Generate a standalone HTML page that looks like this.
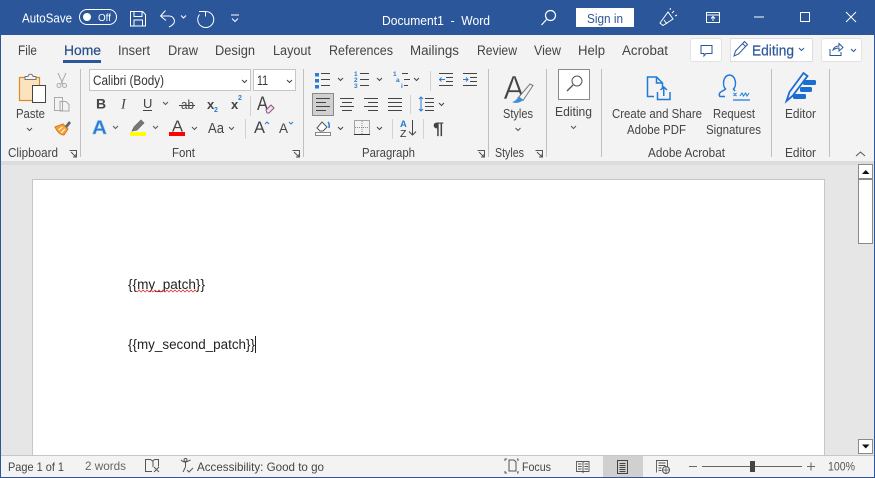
<!DOCTYPE html>
<html><head><meta charset="utf-8"><style>
html,body{margin:0;padding:0;width:875px;height:478px;overflow:hidden;background:#fff}
svg{display:block;position:absolute;left:0;top:0}
text{font-family:"Liberation Sans",sans-serif;font-size:12.800px;fill:#444}
.w{fill:#fff}
.g{stroke:#c6c6c6;stroke-width:1;fill:none}
.d{stroke:#444;stroke-width:1;fill:none}
.c{stroke:#555;stroke-width:1;fill:none}
</style></head><body>
<svg width="875" height="478" viewBox="0 0 875 478" xmlns="http://www.w3.org/2000/svg">
<rect width="875" height="478" fill="#2b579a"/>
<rect x="1" y="35" width="873" height="126" fill="#f3f3f3"/>
<rect x="1" y="161" width="873" height="4" fill="#dcdcdc"/>
<rect x="1" y="165" width="873" height="290" fill="#e6e6e6"/>
<rect x="32.500" y="179.500" width="792" height="290" fill="#fff" stroke="#c6c6c6"/>
<rect x="1" y="455" width="873" height="1" fill="#c6c6c6"/>
<rect x="1" y="456" width="873" height="21" fill="#f3f3f3"/>

<!-- Title bar -->
<text class="w" x="22" y="22.500" textLength="50" lengthAdjust="spacingAndGlyphs" style="font-size:13px">AutoSave</text>
<rect x="79.500" y="9.500" width="37" height="15" rx="7.500" fill="none" stroke="#fff"/>
<circle cx="87" cy="17" r="4" fill="#fff"/>
<text class="w" x="98" y="21" style="font-size:10.500px" textLength="13" lengthAdjust="spacingAndGlyphs">Off</text>
<g fill="none" stroke="#fff" stroke-width="1">
<path d="M130.500 11.500h12l3 3v11.500h-15z"/><path d="M134 11.500v5h8v-5M134 26v-6h8.500v6"/>
<path d="M160.500 16l5-5.500M160.500 16l5.500 4.500M161 16h8c5 0 6 5 5 7-1 2-3 3-5 4"/>
<path d="M181 15.500l2.500 2.500 2.500-2.500"/>
<path d="M205.500 11.500a8 8 0 1 1-6 3M199 11.500h6.500v5"/>
<path d="M231 15h8M232 18.500l3 3 3-3"/>
</g>
<text class="w" x="382" y="25" textLength="108" lengthAdjust="spacingAndGlyphs" style="font-size:13px">Document1&#160;&#160;-&#160;&#160;Word</text>
<g fill="none" stroke="#fff" stroke-width="1.200">
<circle cx="550.500" cy="15.500" r="5"/><path d="M546.500 19.500l-5 5.500"/>
</g>
<rect x="576" y="8" width="58" height="19" fill="#fff"/>
<text x="587" y="23" textLength="36" lengthAdjust="spacingAndGlyphs" style="fill:#2b579a;font-size:13px">Sign in</text>
<g fill="none" stroke="#fff" stroke-width="1">
<path d="M660 23l8-11 5 7-10 6.500zM664 20l3 4M672 13l2-2M675 16l2-1M670 10l.5-2"/>
<rect x="706.500" y="12.500" width="13" height="10"/><path d="M706.500 15h13M713 21v-4M711 18.500l2-2 2 2"/>
<path d="M754 17h10"/>
<rect x="800.500" y="12.500" width="9" height="9"/>
<path d="M846 12l10 10M856 12l-10 10"/>
</g>

<!-- Tabs -->
<text x="18" y="55" textLength="19" lengthAdjust="spacingAndGlyphs" style="font-size:13.500px">File</text>
<text x="64" y="55" textLength="37" lengthAdjust="spacingAndGlyphs" style="font-size:13.500px;fill:#2b4f8a;stroke:#2b4f8a;stroke-width:.25">Home</text>
<text x="118" y="55" textLength="32" lengthAdjust="spacingAndGlyphs" style="font-size:13.500px">Insert</text>
<text x="168" y="55" textLength="30" lengthAdjust="spacingAndGlyphs" style="font-size:13.500px">Draw</text>
<text x="215" y="55" textLength="40" lengthAdjust="spacingAndGlyphs" style="font-size:13.500px">Design</text>
<text x="273" y="55" textLength="38" lengthAdjust="spacingAndGlyphs" style="font-size:13.500px">Layout</text>
<text x="329" y="55" textLength="64" lengthAdjust="spacingAndGlyphs" style="font-size:13.500px">References</text>
<text x="410" y="55" textLength="49" lengthAdjust="spacingAndGlyphs" style="font-size:13.500px">Mailings</text>
<text x="477" y="55" textLength="40" lengthAdjust="spacingAndGlyphs" style="font-size:13.500px">Review</text>
<text x="534" y="55" textLength="27" lengthAdjust="spacingAndGlyphs" style="font-size:13.500px">View</text>
<text x="578" y="55" textLength="27" lengthAdjust="spacingAndGlyphs" style="font-size:13.500px">Help</text>
<text x="622" y="55" textLength="46" lengthAdjust="spacingAndGlyphs" style="font-size:13.500px">Acrobat</text>
<rect x="63" y="60" width="38" height="3" fill="#2b579a"/>

<!-- Comment/Editing/Share -->
<rect x="690.500" y="38.500" width="31" height="23" rx="2" fill="#fff" stroke="#e3e3e3"/>
<path d="M701 45.500h11v8h-6l-2 2.500v-2.500h-3z" fill="none" stroke="#2b579a"/>
<rect x="730.500" y="38.500" width="82" height="23" fill="#fff" stroke="#dedede"/>
<path d="M734 56l1.500-5 9-9.500 3 3-9 9.500zM742.500 43.500l3 3" fill="none" stroke="#2b579a"/>
<text x="752" y="55.500" textLength="42" lengthAdjust="spacingAndGlyphs" style="font-size:14.500px;fill:#2b579a;stroke:#2b579a;stroke-width:.2">Editing</text>
<path d="M799 48l2.500 2.500L804 48" fill="none" stroke="#2b579a"/>
<rect x="821.500" y="38.500" width="40" height="23" rx="2" fill="#fff" stroke="#e3e3e3"/>
<path d="M830 49v6.500h11V52M833 50c1-3 3-4 6-4v-2.500l4 4-4 3.500V48c-2 0-4 .5-6 2z" fill="none" stroke="#2b579a"/>
<path d="M851 49l2.500 2.500L856 49" fill="none" stroke="#2b579a"/>

<!-- Separators -->
<path d="M80.500 69v88M303.500 69v88M488.500 69v88M546.500 69v88M601.500 69v88M771.500 69v88M829.500 69v88" fill="none" stroke="#c0c0c0"/>
<path d="M250.500 96v20M245.500 119v20M430.500 71v20M410.500 95v19M392.500 119v20M423.500 119v20" fill="none" stroke="#d2d2d2"/>

<!-- Clipboard -->
<rect x="19.500" y="77.500" width="20" height="23" fill="#fbe3bd" stroke="#d68a2c" stroke-width="1.200"/>
<path d="M25 79.500v-3h3c0-3 5-3 5 0h3v3z" fill="#f3f3f3" stroke="#777"/>
<rect x="32.500" y="85.500" width="13" height="17" fill="#fff" stroke="#444"/>
<text x="16" y="118" textLength="29" lengthAdjust="spacingAndGlyphs">Paste</text>
<path d="M27 128l2.500 2.500L32 128" class="c"/>
<path d="M58 73l5 11M66 73l-5 11" stroke="#aaa" fill="none"/><circle cx="59" cy="85.500" r="2" fill="none" stroke="#aaa"/><circle cx="64.500" cy="85.500" r="2" fill="none" stroke="#aaa"/>
<path d="M54.500 97.500h8v13h-8zM60 101.500h6l3 3v6.500h-9z" fill="#f3f3f3" stroke="#aaa"/>
<path d="M55 127l8-3 5 5-4 6c-3 0-6-2-9-8z" fill="#f3a43b" stroke="#d67a1c"/><path d="M58.500 130l4-3M61 133l4-4" stroke="#fff" fill="none"/><path d="M65 126l4-5 2 2-4 5z" fill="#666"/>
<text x="8" y="157" textLength="50" lengthAdjust="spacingAndGlyphs">Clipboard</text>
<path d="M69.500 150.500h7v7M71 152l5 5M73 157h3v-3" class="c" stroke-width=".9"/>

<!-- Font -->
<rect x="89.500" y="69.500" width="161" height="21" fill="#fff" stroke="#c6c6c6"/>
<text x="93" y="85" textLength="71" lengthAdjust="spacingAndGlyphs" style="fill:#333;font-size:13.500px">Calibri (Body)</text>
<path d="M242 80l2.500 2.500L247 80" class="d"/>
<rect x="253.500" y="69.500" width="42" height="21" fill="#fff" stroke="#c6c6c6"/>
<text x="257" y="85" textLength="11" lengthAdjust="spacingAndGlyphs" style="fill:#333;font-size:13.500px">11</text>
<path d="M287 80l2.500 2.500L292 80" class="d"/>
<text x="96" y="108.500" style="font-weight:bold;font-size:14px">B</text>
<text x="121" y="108.500" style="font-style:italic;font-family:'Liberation Serif',serif;font-size:14.500px">I</text>
<text x="143" y="108" style="font-size:13px">U</text><path d="M143 110.500h9" class="d"/>
<path d="M163 102l2.500 2.500L168 102" class="c"/>
<text x="181" y="109" textLength="13" lengthAdjust="spacingAndGlyphs" style="font-size:13px">ab</text><path d="M179 105.500h16" class="d"/>
<text x="207" y="109" style="font-weight:bold;font-size:13px">x</text><text x="214" y="112" style="font-size:7px;fill:#2b7cd3;font-weight:bold">2</text>
<text x="231" y="109" style="font-weight:bold;font-size:13px">x</text><text x="238" y="100" style="font-size:7px;fill:#2b7cd3;font-weight:bold">2</text>
<text x="257" y="110" textLength="11" lengthAdjust="spacingAndGlyphs" style="font-size:19px">A</text>
<path d="M266 110l5-5 3 3-5 5h-2z" fill="#f0e0ea" stroke="#8a5a80"/>
<text x="92" y="134" textLength="15" lengthAdjust="spacingAndGlyphs" style="font-size:19px;font-weight:bold;fill:#2b7cd3;stroke:#8fc0ee;stroke-width:.5">A</text>
<path d="M113 126l2.500 2.500L118 126" class="c"/>
<path d="M132 131l2-4 7-7 3 3-7 7z" fill="#777" stroke="#666" stroke-width=".7"/>
<rect x="130" y="132" width="16" height="4" fill="#ffff00"/>
<path d="M153 126l2.500 2.500L158 126" class="c"/>
<text x="172" y="131.500" textLength="11" lengthAdjust="spacingAndGlyphs" style="font-size:16px">A</text>
<rect x="169" y="132" width="16" height="4" fill="#f00"/>
<path d="M192 127l2.500 2.500L197 127" class="c"/>
<text x="208" y="133" textLength="16" lengthAdjust="spacingAndGlyphs" style="font-size:14.500px">Aa</text>
<path d="M229 127l2.500 2.500L234 127" class="c"/>
<text x="254" y="133" textLength="11" lengthAdjust="spacingAndGlyphs" style="font-size:17px">A</text><path d="M265 124l2-2 2 2" fill="none" stroke="#2b7cd3"/>
<text x="279" y="133" textLength="9" lengthAdjust="spacingAndGlyphs" style="font-size:14px">A</text><path d="M289 122l2 2 2-2" fill="none" stroke="#2b7cd3"/>
<text x="172" y="157" textLength="23" lengthAdjust="spacingAndGlyphs">Font</text>
<path d="M292.500 150.500h7v7M294 152l5 5M296 157h3v-3" class="c" stroke-width=".9"/>

<!-- Paragraph -->
<rect x="315" y="73" width="4" height="3.500" fill="#2b7cd3"/><rect x="315" y="79" width="4" height="3.500" fill="#2b7cd3"/><rect x="315" y="85" width="4" height="3.500" fill="#2b7cd3"/>
<path d="M321 73.500h9M321 79.500h9M321 85.500h9M360 73.500h9M360 79.500h9M360 85.500h9M402 73.500h6M404 79.500h6M404 85.500h4" class="d"/>
<text x="354" y="76" style="font-size:6.500px;fill:#2b7cd3;font-weight:bold">1</text><text x="354" y="82" style="font-size:6.500px;fill:#2b7cd3;font-weight:bold">2</text><text x="354" y="88" style="font-size:6.500px;fill:#2b7cd3;font-weight:bold">3</text>
<text x="393" y="76" style="font-size:6.500px;fill:#2b7cd3;font-weight:bold">1</text><text x="396" y="82" style="font-size:6.500px;fill:#2b7cd3;font-weight:bold">a</text><text x="401" y="88" style="font-size:6.500px;fill:#2b7cd3;font-weight:bold">i</text>
<path d="M338 78l2.500 2.500L343 78M377 78l2.500 2.500L382 78M414 78l2.500 2.500L419 78" class="d"/>
<path d="M439 73.500h14M446 77.500h7M446 81.500h7M439 85.500h14M463 73.500h14M470 77.500h7M470 81.500h7M463 85.500h14" class="d"/>
<path d="M445 79.500h-6M441.500 77.500l-2 2 2 2M463 79.500h5M466 77.500l2 2-2 2" fill="none" stroke="#2b7cd3"/>
<rect x="312.500" y="93.500" width="21" height="22" fill="#d0d0d0" stroke="#8a8a8a"/>
<path d="M316 98.500h14M316 102.500h10M316 106.500h14M316 110.500h10" class="d"/>
<path d="M340 98.500h14M342 102.500h10M340 106.500h14M342 110.500h10M364 98.500h14M368 102.500h10M364 106.500h14M368 110.500h10M388 98.500h14M388 102.500h14M388 106.500h14M388 110.500h14" class="d"/>
<path d="M425 98.500h9M425 102.500h9M425 106.500h9M425 110.500h9" class="d"/>
<path d="M421 97v14M419 99l2-2 2 2M419 109l2 2 2-2" fill="none" stroke="#2b7cd3"/>
<path d="M439 103l2.500 2.500L444 103" class="d"/>
<path d="M317 128l5-6 5 5-4 4h-3z" fill="#fff" stroke="#555"/><path d="M328 122c1 1 1.500 3 1 6" stroke="#2b7cd3" fill="none" stroke-width="1.500"/>
<rect x="315.500" y="132.500" width="15" height="3" fill="#fff" stroke="#888"/>
<path d="M338 127l2.500 2.500L343 127" class="d"/>
<rect x="354.500" y="120.500" width="15" height="14" fill="none" stroke="#555" stroke-dasharray="1 1"/>
<path d="M362 121v13M355 127.500h14" stroke="#888" stroke-dasharray="1 1" fill="none"/><path d="M354 134.500h16" stroke="#333"/>
<path d="M377 127l2.500 2.500L382 127" class="d"/>
<text x="400" y="127" style="font-size:9.500px;font-weight:bold;fill:#2b7cd3">A</text><text x="400" y="137" style="font-size:10.500px;fill:#333">Z</text>
<path d="M412.500 120v15M409 131.500l3.500 3.500 3.500-3.500" class="d"/>
<text x="433" y="134" textLength="11" lengthAdjust="spacingAndGlyphs" style="font-size:17px;font-weight:bold">¶</text>
<text x="362" y="157" textLength="53" lengthAdjust="spacingAndGlyphs">Paragraph</text>
<path d="M477.500 150.500h7v7M479 152l5 5M481 157h3v-3" class="c" stroke-width=".9"/>

<!-- Styles -->
<text x="503.500" y="99" textLength="21" lengthAdjust="spacingAndGlyphs" style="font-size:33px;fill:#444;stroke:#f3f3f3;stroke-width:.6">A</text>
<path d="M518 98l12-14 3 1.500-10 15z" fill="#f3f3f3" stroke="#777"/><path d="M512 102c3-.5 5-3 7-5.500l4 3c-1.500 3-7 4.500-11 2.500z" fill="#3d8fd9"/>
<text x="503" y="118" textLength="30" lengthAdjust="spacingAndGlyphs">Styles</text>
<path d="M515.500 128l2.500 2.500 2.500-2.500" class="c"/>
<text x="495" y="157" textLength="29" lengthAdjust="spacingAndGlyphs">Styles</text>
<path d="M535.500 150.500h7v7M537 152l5 5M539 157h3v-3" class="c" stroke-width=".9"/>

<!-- Editing -->
<rect x="558.500" y="69.500" width="31" height="30" fill="#fff" stroke="#8a8a8a"/>
<circle cx="577" cy="81" r="5" fill="none" stroke="#555"/><path d="M573 85l-6 6" stroke="#555" fill="none" stroke-width="1.300"/>
<text x="555" y="116" textLength="37" lengthAdjust="spacingAndGlyphs">Editing</text>
<path d="M571 126l2.500 2.500 2.500-2.500" class="c"/>

<!-- Adobe Acrobat -->
<g fill="none" stroke="#1f7ad8" stroke-width="1.500">
<path d="M654 96.500h-6.500v-19.500h9l6 6v5M656.500 77v6h6"/>
<path d="M657.500 92v7.500h12.500V92M663.750 96v-9M660.500 90l3.250-3 3.250 3"/>
<path d="M725 96.500h-5c-1.500-2-.5-4 1.500-5 2-1 3-1.500 4-2.500-3.500-3.500-2.500-13.500 4-14 6.500.5 7.500 10.500 4 14l1.500 2"/>
<path d="M733 100h17" stroke-width="1.200"/>
<path d="M733.500 93l3 3M736.500 93l-3 3M740 96l2-3 1.500 3 2-3 1.500 3 2-3" stroke-width="1"/>
</g>
<text x="612" y="118" textLength="90" lengthAdjust="spacingAndGlyphs">Create and Share</text>
<text x="627" y="134" textLength="59" lengthAdjust="spacingAndGlyphs">Adobe PDF</text>
<text x="713" y="118" textLength="42" lengthAdjust="spacingAndGlyphs">Request</text>
<text x="706" y="134" textLength="55" lengthAdjust="spacingAndGlyphs">Signatures</text>
<text x="648" y="157" textLength="77" lengthAdjust="spacingAndGlyphs">Adobe Acrobat</text>

<!-- Editor -->
<path d="M786.500 101l3-9 14-19 4 3-15 20z" fill="none" stroke="#1c6dd0" stroke-width="1.800"/>
<rect x="803" y="80" width="13" height="5" rx="1.500" fill="#1c6dd0"/><rect x="800" y="87" width="12" height="5" rx="1.500" fill="#1c6dd0"/><rect x="793" y="94" width="13" height="5" rx="1.500" fill="#1c6dd0"/>
<text x="785" y="118" textLength="31" lengthAdjust="spacingAndGlyphs">Editor</text>
<text x="785" y="157" textLength="31" lengthAdjust="spacingAndGlyphs">Editor</text>
<path d="M856 156l4.500-4 4.500 4" fill="none" stroke="#555"/>

<!-- Document text -->
<text x="128" y="289" textLength="77" lengthAdjust="spacingAndGlyphs" style="font-size:13.500px;fill:#222">{{my_patch}}</text>
<path d="M137 292l2-2 2 2 2-2 2 2 2-2 2 2 2-2 2 2 2-2 2 2 2-2 2 2 2-2 2 2 2-2 2 2 2-2 2 2 2-2 2 2 2-2 2 2 2-2 2 2 2-2 2 2 2-2 2 2 2-2 2 2" fill="none" stroke="#e04040" stroke-width=".8"/>
<text x="128" y="349" textLength="127" lengthAdjust="spacingAndGlyphs" style="font-size:13.500px;fill:#222">{{my_second_patch}}</text>
<rect x="255" y="336" width="1" height="17" fill="#222"/>

<!-- Scrollbar -->
<rect x="858.500" y="164.500" width="14" height="14" fill="#fff" stroke="#8a8a8a"/>
<path d="M862 174h7.500l-3.750-4z" fill="#111"/>
<rect x="858.500" y="179.500" width="14" height="64" fill="#fff" stroke="#8a8a8a"/>
<rect x="858.500" y="439.500" width="14" height="14" fill="#fff" stroke="#8a8a8a"/>
<path d="M862 444.500h7.500l-3.750 4z" fill="#111"/>

<!-- Status bar -->
<text x="8" y="471" textLength="56" lengthAdjust="spacingAndGlyphs" style="font-size:12px">Page 1 of 1</text>
<text x="85" y="470" textLength="41" lengthAdjust="spacingAndGlyphs" style="font-size:12px;fill:#666">2 words</text>
<path d="M152 471.500h-6.500v-12h5l2 1.500 2-1.500h4v7M153 461v6M154 467l5 5M159 467l-5 5" fill="none" stroke="#555"/>
<path d="M181 460c2 2 3 2 4.500 2s3-1 5-2M185.500 462v5M183 472l2.500-5M187 470l2 2 4-4" fill="none" stroke="#555"/><circle cx="185.500" cy="460" r="1.500" fill="none" stroke="#555"/>
<text x="197" y="471" textLength="127" lengthAdjust="spacingAndGlyphs" style="font-size:12px">Accessibility: Good to go</text>
<path d="M505 461v-2h2M505 471v2h2M517 459h1v2M517 473h1v-2M509 471v-11h5l2 2v9z" fill="none" stroke="#555"/>
<text x="522" y="471" textLength="29" lengthAdjust="spacingAndGlyphs" style="font-size:12px">Focus</text>
<path d="M576.500 461.500h6l.5 1 .5-1h5.500v10h-5.500l-.5 1-.5-1h-6zM583 462v10M578 464h3.500M578 466.500h3.500M578 469h3.500M584.500 464h3.500M584.500 466.500h3.500M584.500 469h3.500" fill="none" stroke="#555" stroke-width=".9"/>
<rect x="603" y="456" width="40" height="21" fill="#d0d0d0"/>
<rect x="617.500" y="460.500" width="10" height="13" fill="none" stroke="#444"/>
<path d="M619.500 463.500h6M619.500 465.500h6M619.500 467.500h6M619.500 469.500h6M619.500 471.500h6" stroke="#444" fill="none" stroke-width=".9"/>
<path d="M656.500 472.500v-12h11v7M658.500 463h7M658.500 465.500h7M658.500 468h3M658.500 470.500h3" fill="none" stroke="#555" stroke-width=".9"/>
<circle cx="666" cy="470" r="3.500" fill="#f3f3f3" stroke="#555"/><path d="M662.500 470h7M666 466.500v7" stroke="#555" fill="none" stroke-width=".8"/>
<path d="M689 466.500h8M702 466.500h100M807 466.500h8M811 462.500v8" stroke="#666" fill="none"/>
<rect x="750" y="461" width="5" height="11" fill="#444"/>
<text x="828" y="470.500" textLength="27" lengthAdjust="spacingAndGlyphs" style="font-size:12px;fill:#555">100%</text>
</svg>
</body></html>
